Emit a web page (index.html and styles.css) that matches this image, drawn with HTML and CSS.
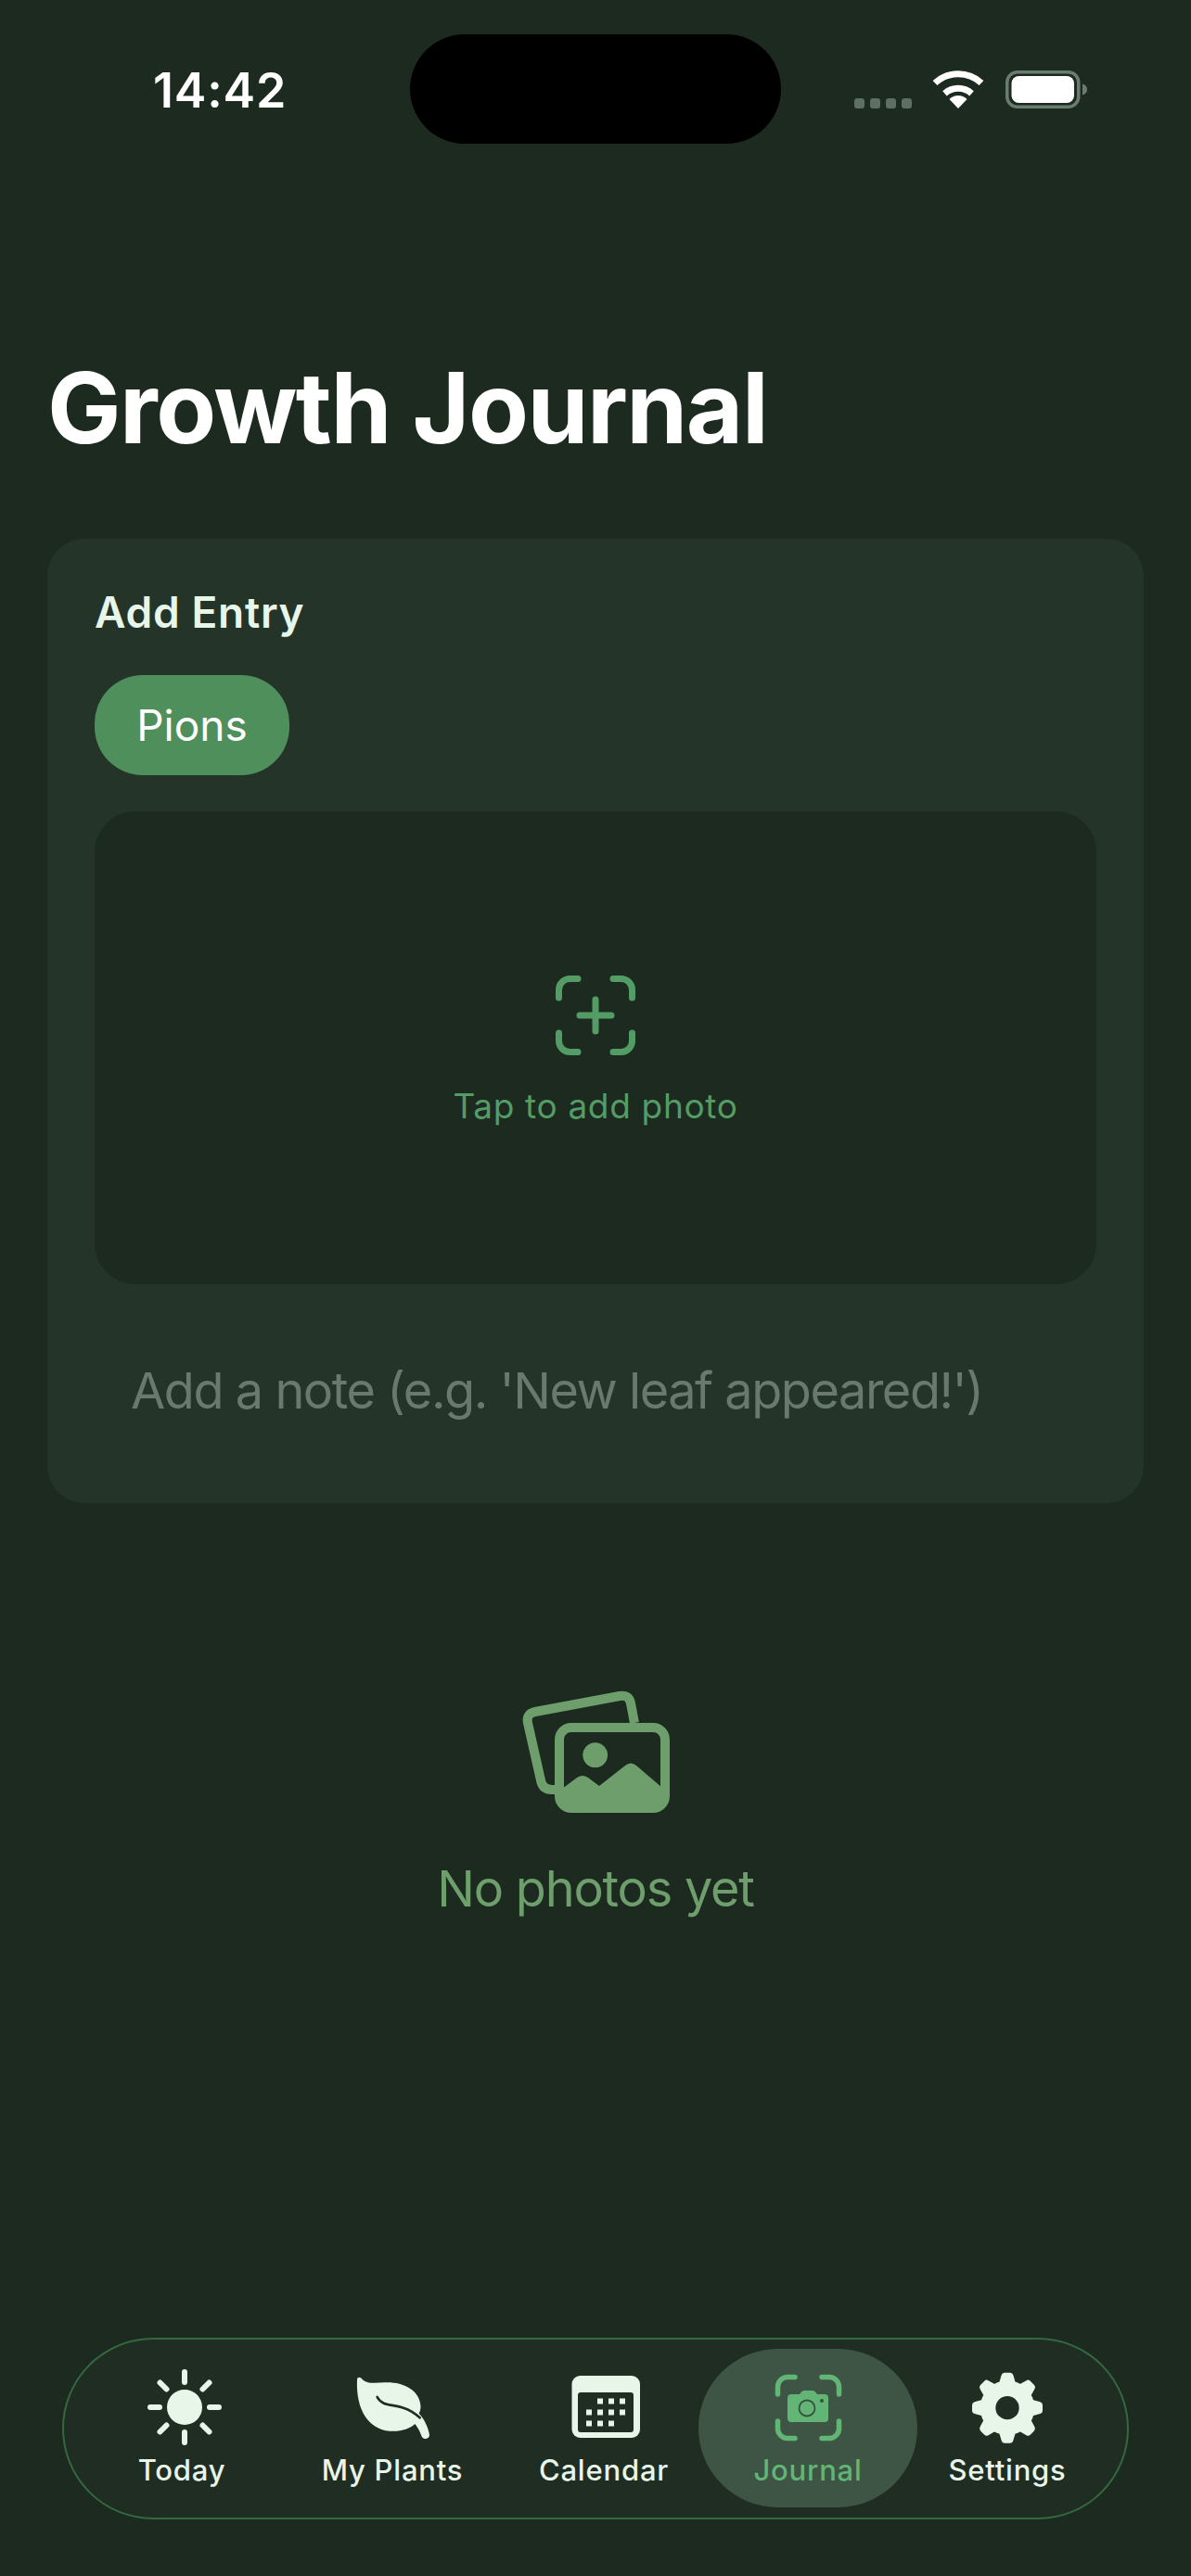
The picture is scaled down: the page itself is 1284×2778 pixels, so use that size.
FILE: index.html
```html
<!DOCTYPE html>
<html lang="en">
<head>
<meta charset="utf-8">
<title>Growth Journal</title>
<link rel="stylesheet" href="styles.css">
</head>
<body>
<div class="page">
  <header class="status">
    <div class="time">14:42</div>
    <div class="island"></div>
    <svg class="status-icons" viewBox="900 60 290 70" aria-hidden="true">
      <g fill="#5d6e63">
        <rect x="921" y="106" width="11" height="11" rx="3"/>
        <rect x="938" y="106" width="11" height="11" rx="3"/>
        <rect x="955" y="106" width="11" height="11" rx="3"/>
        <rect x="972" y="106" width="11" height="11" rx="3"/>
      </g>
      <g fill="none" stroke="#fff" stroke-width="7">
        <path d="M1008 89.500A37 37 0 0 1 1058 89.500"/>
        <path d="M1018.500 100.800A22 22 0 0 1 1047.500 100.800"/>
      </g>
      <path d="M1033 117L1023.500 107A13.500 13.500 0 0 1 1042.500 107Z" fill="#fff"/>
      <rect x="1085.750" y="77.750" width="77" height="37.500" rx="11" fill="none" stroke="#6a7c70" stroke-width="3.500"/>
      <rect x="1090.500" y="82" width="67.500" height="29" rx="8" fill="#fff"/>
      <path d="M1167 90.500Q1172 92 1172 96.500Q1172 101 1167 102.500Z" fill="#6a7c70"/>
    </svg>
  </header>

  <h1 class="title">Growth Journal</h1>

  <section class="card">
    <h2 class="card-title">Add Entry</h2>
    <div class="chip">Pions</div>
    <div class="photo">
      <svg class="photo-icon" viewBox="0 0 86 86" aria-hidden="true">
        <g fill="none" stroke="#549c65" stroke-width="7" stroke-linecap="round">
          <path d="M3.500 24V15.500A12 12 0 0 1 15.500 3.500H24"/>
          <path d="M62 3.500H70.500A12 12 0 0 1 82.500 15.500V24"/>
          <path d="M3.500 62V70.500A12 12 0 0 0 15.500 82.500H24"/>
          <path d="M62 82.500H70.500A12 12 0 0 0 82.500 70.500V62"/>
          <path d="M43 26V60M26 43H60"/>
        </g>
      </svg>
      <div class="photo-label">Tap to add photo</div>
    </div>
    <div class="note">Add a note (e.g. 'New leaf appeared!')</div>
  </section>

  <section class="empty">
    <svg class="empty-icon" viewBox="522 1800 240 180" aria-hidden="true">
      <path d="M598 1930H595Q585 1930 583 1920L569 1858Q567 1848 577 1846L668 1829Q678 1827 680 1837L684 1858" fill="none" stroke="#6d9e6b" stroke-width="10"/>
      <rect x="603" y="1863" width="114" height="87" rx="13" fill="none" stroke="#6d9e6b" stroke-width="10"/>
      <circle cx="641.700" cy="1892.700" r="13.400" fill="#6d9e6b"/>
      <path d="M606 1929L622 1917Q628 1913 634 1917L646 1926L674 1904Q680 1899 686 1904L714 1928V1945H606Z" fill="#6d9e6b"/>
    </svg>
    <div class="empty-label">No photos yet</div>
  </section>

  <nav class="tabbar">
    <div class="tab">
      <svg class="tab-icon" viewBox="0 0 110 90" aria-hidden="true">
        <circle cx="58" cy="46" r="19" fill="#e8f5e9"/>
        <g stroke="#e8f5e9" stroke-width="6" stroke-linecap="round">
          <path d="M58 8V19M58 73V84M21 46H31M85 46H95"/>
          <path d="M31.500 19.500L38.500 26.500M77.500 65.500L84.500 72.500M31.500 72.500L38.500 65.500M77.500 26.500L84.500 19.500"/>
        </g>
      </svg>
      <span class="tab-label">Today</span>
    </div>
    <div class="tab">
      <svg class="tab-icon" viewBox="-6 0 330 270" aria-hidden="true">
        <path d="M45 48C47 38 56 40 62 48C75 62 100 60 135 58C190 55 245 80 250 130C252 143 248 153 245 158C262 175 276 205 279 228C279 240 262 245 255 235C248 215 242 205 232 192C215 208 185 218 150 215C85 210 40 150 45 48Z" fill="#e8f5e9"/>
        <path d="M110 105C125 135 160 128 195 140C220 148 235 160 248 172" fill="none" stroke="#202d23" stroke-width="8" stroke-linecap="round"/>
      </svg>
      <span class="tab-label">My Plants</span>
    </div>
    <div class="tab">
      <svg class="tab-icon" viewBox="-4 0 110 90" aria-hidden="true">
        <rect x="16.500" y="12" width="73.500" height="67" rx="9" fill="#e8f5e9"/>
        <rect x="23" y="30" width="60" height="43" rx="3" fill="#202d23"/>
        <g fill="#e8f5e9">
          <rect x="44" y="36.500" width="6" height="6"/><rect x="56" y="36.500" width="6" height="6"/><rect x="68" y="36.500" width="6" height="6"/>
          <rect x="32" y="48.500" width="6" height="6"/><rect x="44" y="48.500" width="6" height="6"/><rect x="56" y="48.500" width="6" height="6"/><rect x="68" y="48.500" width="6" height="6"/>
          <rect x="32" y="60.500" width="6" height="6"/><rect x="44" y="60.500" width="6" height="6"/><rect x="56" y="60.500" width="6" height="6"/>
        </g>
      </svg>
      <span class="tab-label">Calendar</span>
    </div>
    <div class="tab tab-active">
      <svg class="tab-icon" viewBox="-4 0 110 90" aria-hidden="true">
        <g fill="none" stroke="#62b574" stroke-width="5.500" stroke-linecap="round">
          <path d="M18.500 32V24A10.500 10.500 0 0 1 29 13.500H37"/>
          <path d="M66 13.500H74A10.500 10.500 0 0 1 84.500 24V32"/>
          <path d="M18.500 61V69A10.500 10.500 0 0 0 29 79.500H37"/>
          <path d="M66 79.500H74A10.500 10.500 0 0 0 84.500 69V61"/>
        </g>
        <path d="M33 32H42L44 29.500Q45 28 47 28H56Q58 28 59 29.500L61 32H69Q73 32 73 36V58Q73 62 69 62H33Q29 62 29 58V36Q29 32 33 32Z" fill="#62b574"/>
        <circle cx="50" cy="47" r="8.500" fill="none" stroke="#37523f" stroke-width="1.800"/>
        <circle cx="66" cy="39" r="2" fill="#37523f"/>
      </svg>
      <span class="tab-label">Journal</span>
    </div>
    <div class="tab">
      <svg class="tab-icon" viewBox="3 0 330 270" aria-hidden="true">
        <defs>
          <path id="tooth" d="M-26 -82L-19 -106Q-17 -114 -9 -114H9Q17 -114 19 -106L26 -82Z"/>
        </defs>
        <g transform="translate(168 140)" fill="#e8f5e9">
          <circle r="88"/>
          <use href="#tooth"/>
          <use href="#tooth" transform="rotate(45)"/>
          <use href="#tooth" transform="rotate(90)"/>
          <use href="#tooth" transform="rotate(135)"/>
          <use href="#tooth" transform="rotate(180)"/>
          <use href="#tooth" transform="rotate(225)"/>
          <use href="#tooth" transform="rotate(270)"/>
          <use href="#tooth" transform="rotate(315)"/>
          <circle r="38" fill="#202d23"/>
        </g>
      </svg>
      <span class="tab-label">Settings</span>
    </div>
  </nav>
</div>
</body>
</html>
```

FILE: styles.css
```css
* { box-sizing: border-box; }

html, body {
  margin: 0;
  padding: 0;
  background: #1c2a20;
}

.page {
  width: 1284px;
  height: 2778px;
  display: flex;
  flex-direction: column;
  overflow: hidden;
  background: #1c2a20;
  font-family: Inter, "Liberation Sans", sans-serif;
  color: #e8f5e9;
}

.status {
  display: grid;
  grid-template-columns: 442px 400px 1fr;
  padding-top: 37px;
  height: 155px;
}

.time {
  margin: 31px 0 0 165px;
  font-size: 52px;
  line-height: 60px;
  font-weight: 600;
  letter-spacing: 0.8px;
  color: #fff;
}

.island {
  height: 118px;
  background: #000;
  border-radius: 59px;
}

.status-icons {
  display: block;
  width: 290px;
  height: 70px;
  margin: 23px 0 0 58px;
}

.title {
  margin: 225px 0 0 51px;
  font-size: 106px;
  line-height: 120px;
  font-weight: 700;
  letter-spacing: -1.5px;
  color: #fff;
}

.card {
  height: 1040px;
  margin: 81px 51px 0;
  padding: 51px 51px 0;
  border-radius: 40px;
  background: #243429;
}

.card-title {
  margin: 0;
  font-size: 46px;
  line-height: 56px;
  font-weight: 600;
  letter-spacing: 0.7px;
  color: #e8f5e9;
}

.chip {
  display: flex;
  align-items: center;
  justify-content: center;
  width: 210px;
  height: 108px;
  margin-top: 40px;
  border-radius: 52px;
  background: #4f8f5b;
  font-size: 46px;
  color: #fff;
}

.photo {
  display: flex;
  flex-direction: column;
  align-items: center;
  height: 510px;
  margin-top: 39px;
  padding-top: 177px;
  border-radius: 44px;
  background: #1c2a20;
}

.photo-icon {
  display: block;
  width: 86px;
  height: 86px;
}

.photo-label {
  margin-top: 33px;
  font-size: 37px;
  line-height: 44px;
  letter-spacing: 0.66px;
  color: #549c65;
}

.note {
  margin: 83px 0 0 39px;
  font-size: 54px;
  line-height: 64px;
  letter-spacing: -1.45px;
  color: #68796e;
}

.empty {
  display: flex;
  flex-direction: column;
  align-items: center;
  margin-top: 179px;
}

.empty-icon {
  display: block;
  width: 240px;
  height: 180px;
}

.empty-label {
  margin-top: 25px;
  font-size: 54px;
  line-height: 64px;
  letter-spacing: -1.2px;
  color: #6d9e6b;
}

.tabbar {
  display: grid;
  grid-template-columns: 202px 252px 204px 236px 194px;
  height: 196px;
  margin: auto 67px 61px;
  padding: 10px 0 0 26px;
  border: 2px solid #33693f;
  border-radius: 98px;
  background: #202d23;
}

.tab {
  display: flex;
  flex-direction: column;
  align-items: center;
  height: 171px;
  padding-top: 17px;
  border-radius: 86px;
}

.tab-active {
  background: #3e5545;
  color: #62b574;
}

.tab-icon {
  display: block;
  flex: none;
  width: 110px;
  height: 90px;
}

.tab-label {
  margin-top: 5px;
  font-size: 31px;
  line-height: 38px;
  font-weight: 500;
  letter-spacing: 0.8px;
  white-space: nowrap;
}
```
